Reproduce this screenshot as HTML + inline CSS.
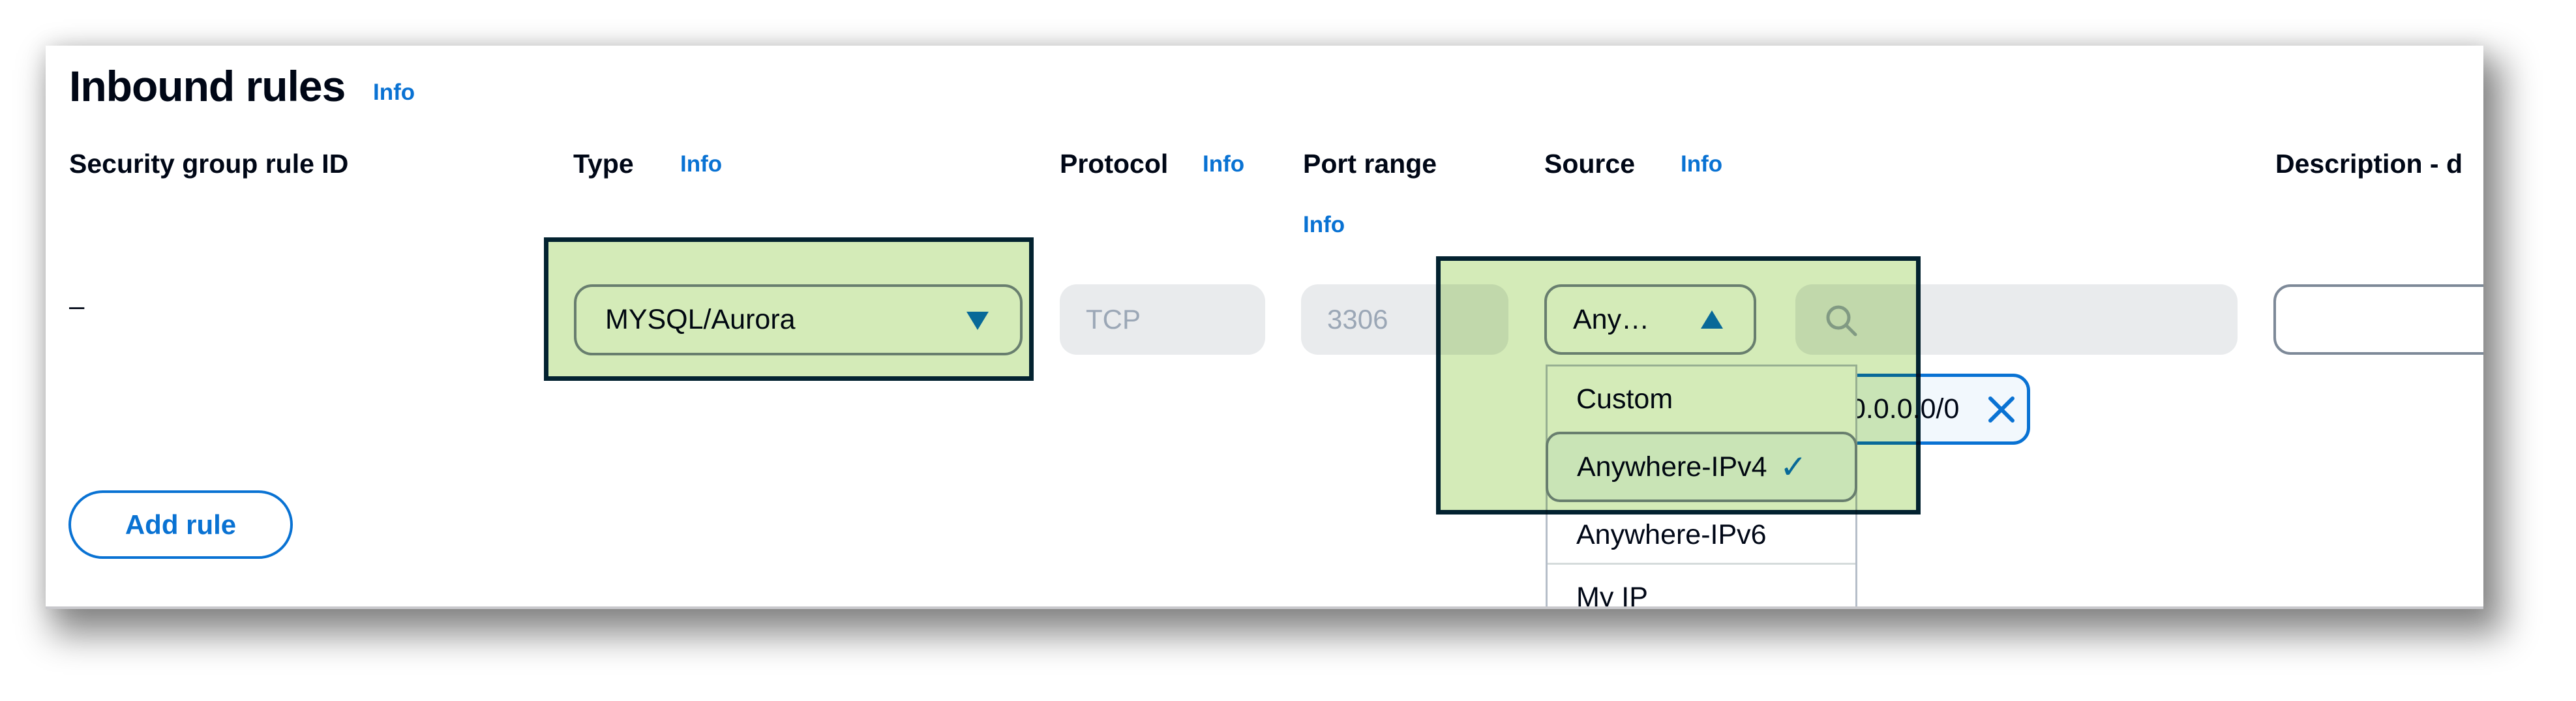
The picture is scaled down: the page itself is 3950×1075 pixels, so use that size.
<!DOCTYPE html>
<html><head><meta charset="utf-8"><style>
*{box-sizing:border-box;margin:0;padding:0}
body{width:3950px;height:1075px;background:#fff;position:relative;overflow:hidden;font-family:"Liberation Sans",sans-serif;color:#000716}
.panel{position:absolute;left:70px;top:70px;width:3738px;height:864px;background:#fff;box-shadow:20px 30px 50px 10px rgba(0,0,0,.45),0 0 30px rgba(0,0,0,.12);overflow:hidden;border-bottom:4px solid #c8c8cc}
.a{position:absolute;white-space:nowrap}
.h{font-weight:bold;font-size:41px;top:158px}
.info{color:#0972d3;font-weight:bold;font-size:35px}
.gray{position:absolute;background:#e9ebed;border-radius:26px;top:366px;height:108px;color:#9ba7b6;font-size:42px;line-height:108px;padding-left:40px}
.ov{position:absolute;background:#d4ebb8;mix-blend-mode:multiply;border:7px solid #032230}
</style></head><body>
<div class="panel">
<div class="a" style="left:36px;top:24px;font-size:66px;font-weight:bold;letter-spacing:-1px">Inbound rules</div>
<div class="a info" style="left:502px;top:52px">Info</div>

<div class="a h" style="left:36px">Security group rule ID</div>
<div class="a h" style="left:809px">Type</div>
<div class="a info" style="left:973px;top:162px">Info</div>
<div class="a h" style="left:1555px">Protocol</div>
<div class="a info" style="left:1774px;top:162px">Info</div>
<div class="a h" style="left:1928px">Port range</div>
<div class="a info" style="left:1928px;top:255px">Info</div>
<div class="a h" style="left:2298px">Source</div>
<div class="a info" style="left:2507px;top:162px">Info</div>
<div class="a h" style="left:3419px">Description - d</div>

<div class="a" style="left:36px;top:375px;font-size:42px">–</div>

<div class="a" style="left:810px;top:366px;width:688px;height:109px;border:4px solid #7d8998;border-radius:28px;font-size:43px;line-height:101px;padding-left:44px">MYSQL/Aurora</div>
<svg class="a" style="left:1412px;top:408px" width="34" height="30"><polygon points="0,0 34,0 17,28" fill="#0972d3"/></svg>

<div class="gray" style="left:1555px;width:315px">TCP</div>
<div class="gray" style="left:1925px;width:318px">3306</div>

<div class="a" style="left:2298px;top:366px;width:325px;height:108px;border:4px solid #7d8998;border-radius:26px;font-size:43px;line-height:100px;padding-left:40px;background:#fff">Any…</div>
<svg class="a" style="left:2538px;top:406px" width="34" height="30"><polygon points="17,0 34,28 0,28" fill="#0972d3"/></svg>

<div class="gray" style="left:2683px;width:678px"></div>
<svg class="a" style="left:2725px;top:393px" width="60" height="60"><circle cx="24" cy="24" r="16" fill="none" stroke="#9ba7b6" stroke-width="5"/><line x1="36" y1="36" x2="50" y2="50" stroke="#9ba7b6" stroke-width="5" stroke-linecap="round"/></svg>

<div class="a" style="left:3416px;top:366px;width:400px;height:108px;border:4px solid #7d8998;border-radius:26px;background:#fff"></div>

<div class="a" style="left:2752px;top:503px;width:291px;height:109px;border:5px solid #0972d3;border-radius:26px;background:#f2f8fd;font-size:43px;line-height:99px;padding-left:10px">0.0.0.0/0</div>
<svg class="a" style="left:2976px;top:535px" width="46" height="46"><path d="M6 6 L40 40 M40 6 L6 40" stroke="#0972d3" stroke-width="6" stroke-linecap="round"/></svg>

<div class="a" style="left:2300px;top:489px;width:478px;height:400px;background:#fff;border:3px solid #b6bec9;border-bottom:none">
 <div style="height:100px;font-size:43px;line-height:100px;padding-left:44px">Custom</div>
 <div style="height:108px;font-size:43px;line-height:100px;padding-left:44px;border:4px solid #7d8998;border-radius:22px;background:#f2f8fd;margin:0 -3px;position:relative">Anywhere-IPv4<span style="position:absolute;left:355px;top:0;color:#0972d3;font-size:50px">✓</span></div>
 <div style="height:96px;font-size:43px;line-height:100px;padding-left:44px;border-bottom:3px solid #d5dbdb">Anywhere-IPv6</div>
 <div style="height:100px;font-size:43px;line-height:100px;padding-left:44px">My IP</div>
</div>

<div class="a" style="left:35px;top:682px;width:344px;height:105px;border:4px solid #0972d3;border-radius:53px;color:#0972d3;font-weight:bold;font-size:42px;line-height:97px;text-align:center">Add rule</div>

<div class="ov" style="left:764px;top:294px;width:751px;height:220px"></div>
<div class="ov" style="left:2132px;top:323px;width:743px;height:396px"></div>
</div>
</body></html>
